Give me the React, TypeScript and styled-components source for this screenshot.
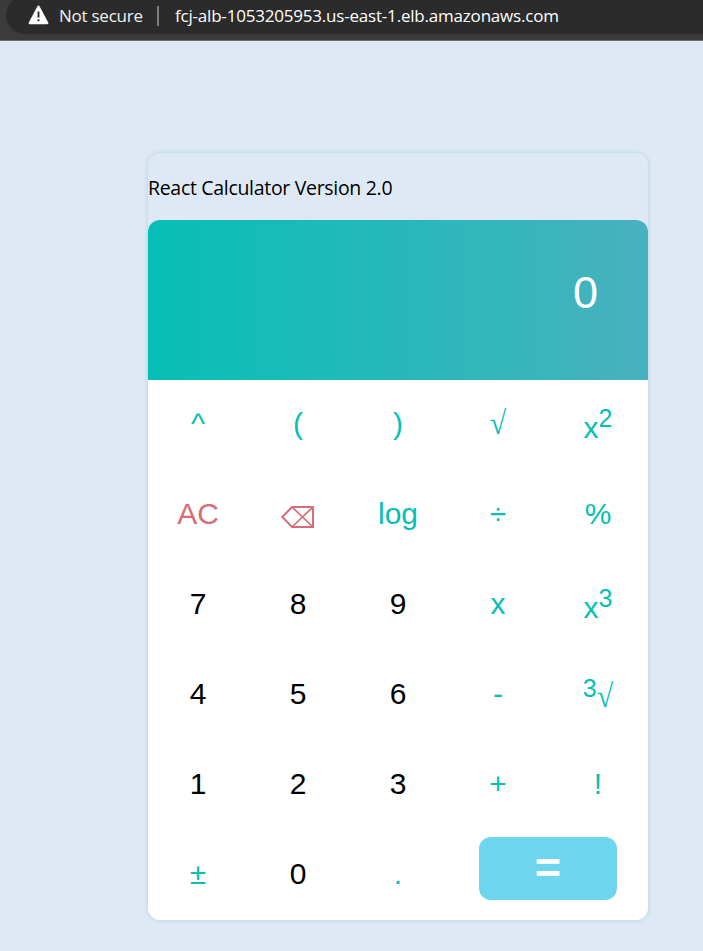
import React from "react";
import styled, { createGlobalStyle } from "styled-components";

const GlobalStyle = createGlobalStyle`
  * { box-sizing: border-box; }
  body { margin: 0; background: #dee9f5; }
`;

const Page = styled.div`
  height: 951px;
  overflow: hidden;
  background: #dee9f5;
`;

const BrowserBar = styled.header`
  height: 41px;
  padding-left: 6px;
  background: #3b3b3b;
  border-bottom: 1px solid #6b6e70;
  overflow: hidden;
`;

const AddressBar = styled.div`
  display: flex;
  align-items: center;
  height: 38px;
  width: 760px;
  margin-top: -4px;
  padding-left: 22px;
  border-radius: 19px;
  background: #2b2b2b;
  color: #fff;
  font-family: "Open Sans", sans-serif;
  font-size: 17px;
  line-height: 24px;
  white-space: nowrap;
`;

const WarningIcon = styled.svg`
  width: 21px;
  height: 20px;
  margin-right: 10px;
  flex: none;
`;

const Security = styled.span`
  width: 98px;
  padding-top: 1px;
  color: #f0f0f0;
  letter-spacing: -0.25px;
`;

const Divider = styled.i`
  width: 2px;
  height: 20px;
  margin: 2px 16px 0 0;
  background: #7c7c7c;
`;

const Address = styled.span`
  padding-top: 1px;
  letter-spacing: -0.2px;
`;

const Calculator = styled.main`
  width: 500px;
  height: 767px;
  margin: 112px 0 0 148px;
  border-radius: 12px;
  box-shadow: 0 0 4px rgba(4, 150, 160, 0.25);
`;

const Title = styled.p`
  height: 67px;
  margin: 0;
  padding-top: 21px;
  font-family: "Open Sans", sans-serif;
  font-size: 19.5px;
  line-height: 28px;
  letter-spacing: -0.31px;
  white-space: nowrap;
  color: #000;
`;

const Display = styled.div`
  display: flex;
  justify-content: flex-end;
  height: 160px;
  padding: 47px 50px 0 0;
  border-radius: 12px 12px 0 0;
  background: linear-gradient(to right, #06bfb6, #48b1bf);
  color: #fff;
  font: 45px/52px "Liberation Sans", Arial, sans-serif;
`;

const Keypad = styled.div`
  display: grid;
  grid-template-columns: repeat(5, 100px);
  grid-auto-rows: 90px;
  border-radius: 0 0 12px 12px;
  background: #fff;
`;

type Tone = "digit" | "operator" | "clear";
const tones: Record<Tone, string> = {
  digit: "#000",
  operator: "#06bfb6",
  clear: "#d76d77",
};

const Key = styled.button<{ $tone: Tone }>`
  display: block;
  padding: 0 0 2px;
  border: 0;
  background: none;
  color: ${(p) => tones[p.$tone]};
  font: 30px "Liberation Sans", Arial, sans-serif;

  sup {
    font-size: 25px;
  }
`;

const Radical = styled.span<{ $lift?: number }>`
  display: inline-block;
  font-family: "Liberation Serif", serif;
  line-height: 1;
  transform: translateY(${(p) => -(p.$lift ?? 0)}px) scaleY(1.1);
`;

const EqualsKey = styled.button`
  grid-column: span 2;
  width: 138px;
  height: 63px;
  margin: 7px 0 0 31px;
  padding: 0 0 1px;
  border: 0;
  border-radius: 12px;
  background: #6dd5ed;
  color: #fff;
  font: bold 45px "Liberation Sans", Arial, sans-serif;
`;

const EraseIcon = styled.svg`
  display: block;
  width: 34px;
  height: 22px;
  margin: 5px auto 0;
`;

const Erase = () => (
  <EraseIcon viewBox="0 0 34 22" fill="none" stroke="currentColor" strokeWidth="2">
    <path d="M1.3 11 11 1H32V21H11Z" />
    <path d="M11 1 32 21M11 21 32 1" strokeWidth="1.7" />
  </EraseIcon>
);

const keys: { label: React.ReactNode; tone: Tone }[] = [
  { label: "^", tone: "operator" },
  { label: "(", tone: "operator" },
  { label: ")", tone: "operator" },
  { label: <Radical $lift={1}>√</Radical>, tone: "operator" },
  { label: <>x<sup>2</sup></>, tone: "operator" },
  { label: "AC", tone: "clear" },
  { label: <Erase />, tone: "clear" },
  { label: "log", tone: "operator" },
  { label: "÷", tone: "operator" },
  { label: "%", tone: "operator" },
  { label: "7", tone: "digit" },
  { label: "8", tone: "digit" },
  { label: "9", tone: "digit" },
  { label: "x", tone: "operator" },
  { label: <>x<sup>3</sup></>, tone: "operator" },
  { label: "4", tone: "digit" },
  { label: "5", tone: "digit" },
  { label: "6", tone: "digit" },
  { label: "-", tone: "operator" },
  { label: <><sup>3</sup><Radical $lift={2}>√</Radical></>, tone: "operator" },
  { label: "1", tone: "digit" },
  { label: "2", tone: "digit" },
  { label: "3", tone: "digit" },
  { label: "+", tone: "operator" },
  { label: "!", tone: "operator" },
  { label: "±", tone: "operator" },
  { label: "0", tone: "digit" },
  { label: ".", tone: "operator" },
];

export default function App() {
  return (
    <Page>
      <GlobalStyle />
      <BrowserBar>
        <AddressBar>
          <WarningIcon viewBox="0 0 21 20">
            <path d="M10.5 1.8 19.2 18H1.8Z" fill="#fff" stroke="#fff" strokeWidth="2.4" strokeLinejoin="round" />
            <path d="M10.5 6.5V12.5M10.5 14.2V16.2" stroke="#2b2b2b" strokeWidth="1.9" />
          </WarningIcon>
          <Security>Not secure</Security>
          <Divider />
          <Address>fcj-alb-1053205953.us-east-1.elb.amazonaws.com</Address>
        </AddressBar>
      </BrowserBar>
      <Calculator>
        <Title>React Calculator Version 2.0</Title>
        <Display>0</Display>
        <Keypad>
          {keys.map((key, i) => (
            <Key key={i} $tone={key.tone}>{key.label}</Key>
          ))}
          <EqualsKey>=</EqualsKey>
        </Keypad>
      </Calculator>
    </Page>
  );
}
